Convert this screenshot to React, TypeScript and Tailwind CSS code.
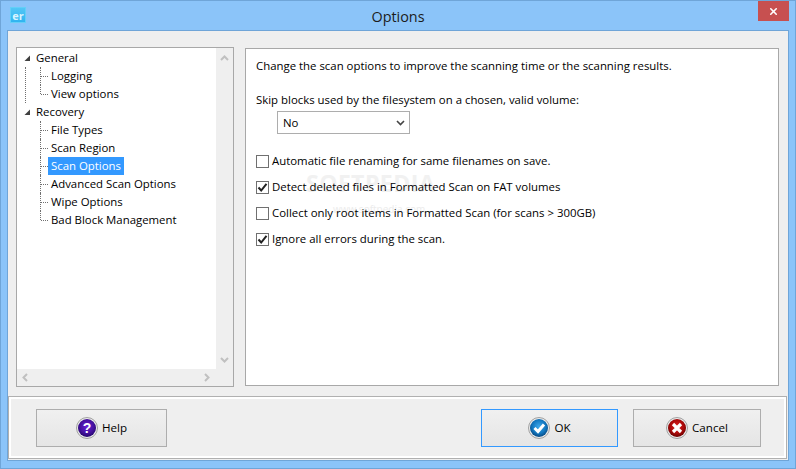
import React from 'react';
import { X } from 'lucide-react';

const uiFont = { fontFamily: '"Open Sans", "Noto Sans", sans-serif' };

const children1 = ['Logging', 'View options'];
const children2 = ['File Types', 'Scan Region', 'Scan Options', 'Advanced Scan Options', 'Wipe Options', 'Bad Block Management'];

const Expander = () => (
  <svg width="7" height="7" viewBox="0 0 7 7" className="shrink-0">
    <path d="M6 0.5V6H0.5Z" fill="#404040" />
  </svg>
);

const Parent = ({ label }: { label: string }) => (
  <div className="h-[18px] flex items-center pl-[7px]">
    <Expander />
    <span className="ml-[5px] text-[11.4px] text-black leading-[18px]">{label}</span>
  </div>
);

const Child = ({ label, selected, last }: { label: string; selected?: boolean; last?: boolean }) => (
  <div className="h-[18px] flex items-center relative pl-[31px]">
    <span className={`absolute left-[23px] top-0 w-0 border-l border-dotted border-[#707070] ${last ? 'h-[9px]' : 'h-[18px]'}`} />
    <span className="absolute left-[24px] top-[9px] w-[7px] h-0 border-t border-dotted border-[#707070]" />
    <span className={`h-[18px] px-[3px] text-[11.4px] leading-[18px] ${selected ? 'bg-[#3399ff] text-white' : 'text-black'}`}>{label}</span>
  </div>
);

const ScrollArrow = ({ d }: { d: string }) => (
  <svg width="9" height="9" viewBox="0 0 9 9">
    <path d={d} fill="none" stroke="#c0c0c0" strokeWidth="2" />
  </svg>
);

const Check = ({ checked, label }: { checked?: boolean; label: string }) => (
  <div className="flex items-center h-[26px]">
    <div className="w-[13px] h-[13px] border border-[#707070] bg-white flex items-center justify-center shrink-0">
      {checked && (
        <svg width="11" height="11" viewBox="0 0 11 11">
          <path d="M1.5 5.5L4.2 8.5L9.5 1.8" fill="none" stroke="#222" strokeWidth="2" />
        </svg>
      )}
    </div>
    <span className="ml-[3px] text-[11.4px] text-black">{label}</span>
  </div>
);

const Ball = ({ id, light, mid, dark, children }: { id: string; light: string; mid: string; dark: string; children: React.ReactNode }) => (
  <svg width="22" height="22" viewBox="0 0 22 22" className="shrink-0">
    <defs>
      <radialGradient id={id} cx="0.5" cy="0.42" r="0.62">
        <stop offset="0" stopColor={light} />
        <stop offset="0.6" stopColor={mid} />
        <stop offset="1" stopColor={dark} />
      </radialGradient>
    </defs>
    <circle cx="11" cy="11" r="10.5" fill="#ececec" stroke="#a0a0a0" />
    <circle cx="11" cy="11" r="9" fill={`url(#${id})`} />
    {children}
  </svg>
);

const DlgButton = ({ w, focused, icon, label }: { w: string; focused?: boolean; icon: React.ReactNode; label: string }) => (
  <button className={`${w} h-[38px] border ${focused ? 'border-[#3399ff]' : 'border-[#adadad]'} bg-gradient-to-b from-[#f0f0f0] to-[#e5e5e5] flex items-center justify-center gap-[4px] text-[11.6px] text-black`}>
    {icon}
    <span>{label}</span>
  </button>
);

export default function App() {
  return (
    <div style={uiFont} className="w-[796px] h-[469px] bg-[#8bc4f9] border border-[#6fa5d8] flex flex-col overflow-hidden">
      <div className="h-[29px] shrink-0 relative flex items-center justify-center">
        <div className="absolute left-[9px] top-[6px] w-[16px] h-[16px] bg-gradient-to-b from-[#52c6f6] to-[#2fb4f0] border border-[#63cff8] flex items-center justify-center text-[#d8f4ff] font-bold text-[11px] leading-none">er</div>
        <span className="text-[14.4px] text-[#1c1c1c] mt-[2px]">Options</span>
        <div className="absolute right-[6px] top-0 w-[31px] h-[20px] bg-[#c75050] flex items-center justify-center">
          <X size={11} strokeWidth={3.5} color="#fff" />
        </div>
      </div>

      <div className="ml-[6px] mr-[6px] mb-[7px] flex-1 bg-[#efefef] border border-[#6fa5d8] flex flex-col min-h-0">
        <div className="flex-1 flex gap-[11px] pl-[8px] pr-[9px] pt-[16px] pb-[9px] min-h-0">
          <div className="w-[218px] border border-[#a8a8a8] flex bg-[#efefef]">
            <div className="flex-1 flex flex-col min-w-0">
              <div className="flex-1 bg-white pt-[1px]">
                <Parent label="General" />
                <div className="relative">
                  <span className="absolute left-[8px] top-0 h-full w-0 border-l border-dotted border-[#707070]" />
                  {children1.map((c, i) => (
                    <Child key={c} label={c} last={i === children1.length - 1} />
                  ))}
                </div>
                <Parent label="Recovery" />
                {children2.map((c, i) => (
                  <Child key={c} label={c} selected={c === 'Scan Options'} last={i === children2.length - 1} />
                ))}
              </div>
              <div className="h-[17px] flex items-center justify-between pl-[4px] pr-[5px] pb-[1px] shrink-0">
                <ScrollArrow d="M6 1L2.5 4.5L6 8" />
                <ScrollArrow d="M3 1L6.5 4.5L3 8" />
              </div>
            </div>
            <div className="w-[17px] shrink-0 flex flex-col items-center justify-between pt-[6px] pb-[22px]">
              <ScrollArrow d="M1 6L4.5 2.5L8 6" />
              <ScrollArrow d="M1 3L4.5 6.5L8 3" />
            </div>
          </div>

          <div className="flex-1 bg-white border border-[#a8a8a8] relative isolate pl-[10px] pt-[8px] mt-[1px] mb-[1px]">
            <div className="absolute left-[60px] top-[123px] -z-10 text-[#f1f1f1] font-bold text-[23px] leading-[23px] tracking-[0.5px]">SOFTPEDIA</div>
            <div className="absolute left-[87px] top-[155px] -z-10 text-[#ececec] text-[10px] leading-[10px]">www.softpedia.com</div>
            <p className="text-[11.4px] text-black leading-[17px]">Change the scan options to improve the scanning time or the scanning results.</p>
            <p className="text-[11.4px] text-black leading-[17px] mt-[17px]">Skip blocks used by the filesystem on a chosen, valid volume:</p>
            <div className="ml-[21px] mt-[3px] w-[133px] h-[23px] border border-[#adadad] flex items-center justify-between pl-[5px] pr-[4px] text-[11.4px] text-black">
              <span>No</span>
              <svg width="9" height="6" viewBox="0 0 9 6">
                <path d="M1 1L4.5 4.5L8 1" fill="none" stroke="#444" strokeWidth="1.6" />
              </svg>
            </div>
            <div className="mt-[14px] flex flex-col">
              <Check label="Automatic file renaming for same filenames on save." />
              <Check checked label="Detect deleted files in Formatted Scan on FAT volumes" />
              <Check label="Collect only root items in Formatted Scan (for scans > 300GB)" />
              <Check checked label="Ignore all errors during the scan." />
            </div>
          </div>
        </div>

        <div className="h-[63px] shrink-0 mr-[1px] mb-[1px] border border-[#b0b0b0] flex">
          <div className="flex-1 border-[2px] border-white flex items-center justify-between pl-[25px] pr-[23px] pt-[1px]">
            <DlgButton
              w="w-[131px]"
              label="Help"
              icon={
                <Ball id="helpBall" light="#6a22d8" mid="#45109f" dark="#1d0560">
                  <text x="11" y="16" textAnchor="middle" fontSize="14" fontWeight="700" fill="#fff" fontFamily="Liberation Sans, sans-serif">?</text>
                </Ball>
              }
            />
            <div className="flex gap-[15px]">
              <DlgButton
                w="w-[137px]"
                focused
                label="OK"
                icon={
                  <Ball id="okBall" light="#3ea8ea" mid="#1277c0" dark="#063f74">
                    <path d="M6.5 11L10 14.5L16 7.5" fill="none" stroke="#fff" strokeWidth="3" />
                  </Ball>
                }
              />
              <DlgButton
                w="w-[128px]"
                label="Cancel"
                icon={
                  <Ball id="cancelBall" light="#e02020" mid="#ab0a0a" dark="#5a0000">
                    <path d="M7 7L15 15M15 7L7 15" fill="none" stroke="#fff" strokeWidth="3.2" />
                  </Ball>
                }
              />
            </div>
          </div>
        </div>
      </div>
    </div>
  );
}
